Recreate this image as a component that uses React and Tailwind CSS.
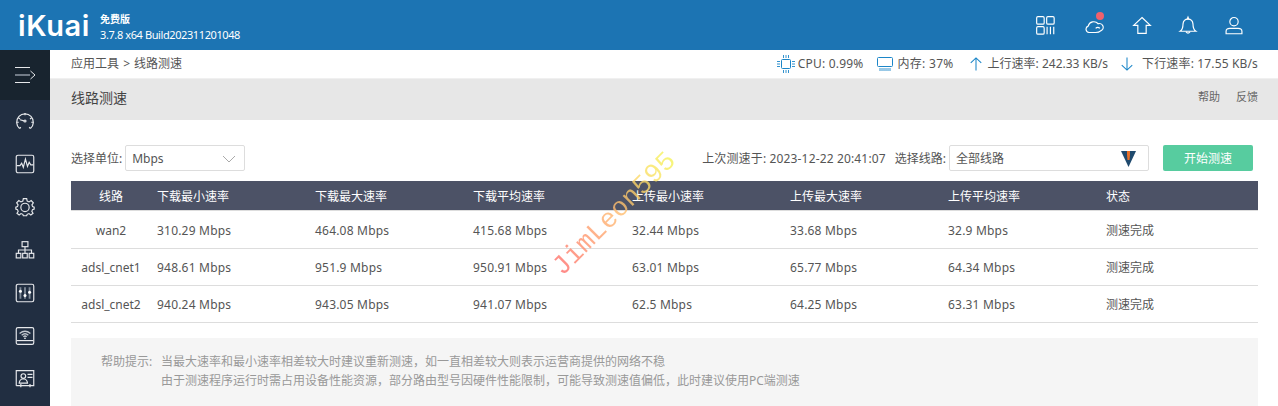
import React from 'react';

const rows = [
  ['wan2', '310.29 Mbps', '464.08 Mbps', '415.68 Mbps', '32.44 Mbps', '33.68 Mbps', '32.9 Mbps', 'h-[38px] pt-[2px]'],
  ['adsl_cnet1', '948.61 Mbps', '951.9 Mbps', '950.91 Mbps', '63.01 Mbps', '65.77 Mbps', '64.34 Mbps', 'h-[37px] pt-[2px]'],
  ['adsl_cnet2', '940.24 Mbps', '943.05 Mbps', '941.07 Mbps', '62.5 Mbps', '64.25 Mbps', '63.31 Mbps', 'h-[37px] pt-[1px]'],
];

const heads = ['下载最小速率', '下载最大速率', '下载平均速率', '上传最小速率', '上传最大速率', '上传平均速率', '状态'];

const Ico = ({ children, className = '', w = 20, h = 20, sw = 1.4 }) => (
  <svg width={w} height={h} viewBox="0 0 24 24" fill="none" stroke="currentColor" strokeWidth={sw} className={className}>
    {children}
  </svg>
);

const sideIcons = [
  <Ico key="gauge">
    <path d="M5.5 21 A10 10 0 1 1 18.5 21" />
    <path d="M5.5 21 L7 19.5 M18.5 21 L17 19.5 M12 2.5 V5 M4 8 L6 9.5 M20 8 L18 9.5 M2 13.5 H4.5 M22 13.5 H19.5" />
    <circle cx="12" cy="12" r="1.2" />
    <path d="M10.8 11.8 L6 10.5" />
  </Ico>,
  <Ico key="pulse">
    <rect x="1.5" y="1.5" width="21" height="21" rx="2" />
    <path d="M2 14 H6 L8 11 L10 16 L12.5 6 L15 15 L17 10 L19 13 H22" />
  </Ico>,
  <Ico key="gear">
    <path d="M10 2.5 H14 L14.6 5.4 L16.9 6.4 L19.4 4.8 L22 7.6 L20.3 10 L21.1 12 L23 12.6 V15 L21 15.7 L20.2 17.8 L21.6 20 L19 22 L16.8 20.4 L14.6 21.3 L14 23 H10 L9.4 21.3 L7.2 20.4 L5 22 L2.4 20 L3.8 17.8 L3 15.7 L1 15 V12.6 L3 12 L3.7 10 L2 7.6 L4.6 4.8 L7.1 6.4 L9.4 5.4 Z" transform="translate(0 -0.5)" />
    <circle cx="12" cy="12.5" r="5" />
  </Ico>,
  <Ico key="tree">
    <rect x="8.5" y="2" width="7" height="6" />
    <rect x="1.5" y="16" width="5.5" height="5.5" />
    <rect x="9.2" y="16" width="5.5" height="5.5" />
    <rect x="17" y="16" width="5.5" height="5.5" />
    <path d="M12 8 V16 M4.2 16 V12 H19.8 V16" />
  </Ico>,
  <Ico key="sliders">
    <rect x="1.5" y="1.5" width="21" height="21" rx="2" />
    <path d="M6.5 5 V19 M12 5 V19 M17.5 5 V19" strokeWidth="2.2" stroke="#7f8a97" />
    <circle cx="6.5" cy="10" r="1.8" fill="#fff" stroke="none" />
    <circle cx="12" cy="15" r="1.8" fill="#fff" stroke="none" />
    <circle cx="17.5" cy="11" r="1.8" fill="#fff" stroke="none" />
  </Ico>,
  <Ico key="wifi">
    <rect x="1.5" y="2" width="21" height="20" rx="2" />
    <path d="M2 17.5 H22" />
    <path d="M5.5 9 Q12 3.5 18.5 9 M8 11 Q12 7.5 16 11 M10 13 Q12 11 14 13" strokeWidth="1.6" stroke="#c3c8cf" />
    <circle cx="12" cy="14.8" r="1" fill="#fff" stroke="none" />
  </Ico>,
  <Ico key="card">
    <path d="M1.5 20 V2 H22.5 V20 H1.5 M7 18 V22 M18 18 V22" />
    <circle cx="10" cy="8.5" r="2.8" />
    <path d="M5 17 Q5.5 12.5 9 12 H11 Q14.5 12.5 15 17 Z" />
    <path d="M15 6.5 H21 M15 10 H21" />
  </Ico>,
];

const App = () => {
  return (
    <div className="relative w-[1278px] h-[406px] overflow-hidden bg-white text-[12px] text-[#555] font-['Noto_Sans','Noto_Sans_CJK_SC',sans-serif]">
      {/* top bar */}
      <div className="flex items-center h-[50px] bg-[#1c74b3] text-white">
        <div className="w-[100px] pl-[18px] pt-[1px] text-[29px] leading-none font-semibold font-['Inter',sans-serif] tracking-[0.6px]">iKuai</div>
        <div className="text-[11px] leading-[15px] pt-[4px] tracking-[-0.4px]">
          <div className="font-bold text-[10px] tracking-normal">免费版</div>
          <div>3.7.8 x64 Build202311201048</div>
        </div>
        <div className="ml-auto flex items-center pr-[34px]">
          <Ico>
            <rect x="2" y="2" width="9" height="9" rx="1.5" />
            <rect x="14" y="2" width="9" height="9" rx="1.5" />
            <rect x="2" y="14" width="9" height="9" rx="1.5" />
            <path d="M14.5 14 V23 M18.5 14 V23 M22.5 14 V23" />
          </Ico>
          <div className="relative ml-[29px]">
            <Ico>
              <path d="M6 21 A4 4 0 0 1 5 13.3 A7 7 0 0 1 17 10.5 A4.5 4.5 0 0 1 20 19 Q18 21 14 21 Z" />
              <path d="M14 16 A3.5 3.5 0 0 1 19 16" />
            </Ico>
            <div className="absolute right-[0px] top-[-3px] w-[8px] h-[8px] rounded-full bg-[#f0616d]" />
          </div>
          <Ico className="ml-[28px]">
            <path d="M12 3 L22 12.5 H17 V22 H7 V12.5 H2 Z" />
          </Ico>
          <Ico className="ml-[26px]">
            <path d="M2.5 19.5 Q6 17 6 11 Q6.5 5 12 5 Q17.5 5 18 11 Q18 17 21.5 19.5 Z" />
            <path d="M11 5 L12 2.5 L13 5 M9.5 20 Q12 23.5 14.5 20" />
          </Ico>
          <Ico className="ml-[26px]">
            <circle cx="12" cy="8" r="5" />
            <path d="M2.5 22.5 V19.5 Q2.5 16 7 16 H17 Q21.5 16 21.5 19.5 V22.5 Z" />
          </Ico>
        </div>
      </div>

      <div className="flex h-[356px]">
        {/* side nav */}
        <div className="w-[50px] shrink-0 overflow-hidden bg-[#212e41] text-[#e6e8eb]">
          <div className="flex items-center justify-center h-[50px] bg-[#18242f]">
            <svg width="21" height="18" viewBox="0 0 21 18" fill="none" stroke="currentColor">
              <path d="M0 1.5 H15 M0 16.5 H15" />
              <path d="M0 9 H15" stroke="#8f99a5" strokeWidth="1.5" />
              <path d="M15.5 5 L20 9 L15.5 13" />
            </svg>
          </div>
          <div className="-mt-[1px]">
            {sideIcons.map((icon, i) => (
              <div key={i} className="flex items-center justify-center h-[43px]">{icon}</div>
            ))}
          </div>
        </div>

        <div className="flex-1 min-w-0">
          {/* status line */}
          <div className="flex items-center justify-between h-[29px] pl-[21px] pr-[20px] border-b border-[#f0f0f0]">
            <div className="text-[#555]">应用工具 <span className="mx-[1px]">&gt;</span> 线路测速</div>
            <div className="flex items-center">
              <svg width="18" height="18" viewBox="0 0 18 18" fill="none" stroke="currentColor" className="text-[#1c86c8] mr-[3px]">
                <rect x="4.5" y="4.5" width="9" height="9" rx="1" />
                <path d="M6.5 0 V3 M9 0 V3 M11.5 0 V3 M6.5 15 V18 M9 15 V18 M11.5 15 V18 M0 6.5 H3 M0 9 H3 M0 11.5 H3 M15 6.5 H18 M15 9 H18 M15 11.5 H18" strokeWidth="0.9" />
              </svg>
              <span className="tracking-[0.2px]">CPU: 0.99%</span>
              <svg width="16" height="15" viewBox="0 0 16 15" fill="none" stroke="currentColor" className="text-[#1c86c8] ml-[14px] mr-[4px]">
                <rect x="0.5" y="0.5" width="15" height="9" rx="1" />
                <path d="M3 11 V14 M5 11 V14 M7 11 V14 M9 11 V14 M11 11 V14 M13 11 V14" strokeWidth="0.9" />
              </svg>
              <span className="tracking-[0.3px]">内存: 37%</span>
              <Ico w={14} h={16} className="text-[#1c86c8] ml-[15px] mr-[5px]" sw={1.8}>
                <path d="M12 1.5 V23 M3 10 L12 1.5 L21 10" />
              </Ico>
              <span>上行速率: 242.33 KB/s</span>
              <Ico w={14} h={16} className="text-[#1c86c8] ml-[12px] mr-[8px]" sw={1.8}>
                <path d="M12 1 V22.5 M3 14 L12 22.5 L21 14" />
              </Ico>
              <span className="tracking-[0.15px]">下行速率: 17.55 KB/s</span>
            </div>
          </div>

          {/* title line */}
          <div className="flex items-center justify-between h-[41px] pb-[4px] pl-[21px] pr-[20px] bg-[#e7e7e7]">
            <div className="text-[14px] text-[#444]">线路测速</div>
            <div className="flex gap-[16px] text-[11px] text-[#666]">
              <span>帮助</span>
              <span>反馈</span>
            </div>
          </div>

          <div className="pl-[21px] pr-[20px]">
            {/* toolbar */}
            <div className="flex items-center justify-between h-[26px] mt-[25px]">
              <div className="flex items-center">
                <span className="mr-[3px] pt-[1px]">选择单位:</span>
                <div className="flex items-center justify-between w-[120px] h-[26px] pl-[6px] pr-[8px] pt-[1px] border border-[#ddd] rounded-[2px]">
                  <span>Mbps</span>
                  <svg width="14" height="8" viewBox="0 0 14 8" fill="none" stroke="#aaa"><path d="M1 1 L7 7 L13 1" /></svg>
                </div>
              </div>
              <div className="flex items-center pr-[5px]">
                <span className="tracking-[0.15px] pt-[1px]">上次测速于: 2023-12-22 20:41:07</span>
                <span className="ml-[9px] mr-[3px] pt-[1px]">选择线路:</span>
                <div className="flex items-center justify-between w-[200px] h-[26px] pl-[6px] pr-[12px] pt-[1px] border border-[#ddd] rounded-[2px]">
                  <span>全部线路</span>
                  <svg width="15" height="18" viewBox="0 0 15 18">
                    <path d="M0 1 H15 L7.5 17 Z" fill="#1f4a6e" />
                    <path d="M6 1 H9 V5 L8.5 10 H6.5 L6 5 Z" fill="#e8702a" />
                  </svg>
                </div>
                <button className="ml-[14px] w-[90px] h-[26px] pt-[1px] rounded-[2px] bg-[#57cc9f] text-white">开始测速</button>
              </div>
            </div>

            {/* table */}
            <div className="mt-[10px]">
              <div className="grid grid-cols-[86px_158px_158px_159px_158px_158px_158px_152px] items-center h-[30px] pt-[2px] bg-[#4c5266] text-white border-b border-[#ddd]">
                <div className="pr-[6px] text-center">线路</div>
                {heads.map((h) => (
                  <div key={h}>{h}</div>
                ))}
              </div>
              {rows.map((r) => (
                <div key={r[0]} className={`grid grid-cols-[86px_158px_158px_159px_158px_158px_158px_152px] items-center border-b border-[#ddd] ${r[7]}`}>
                  <div className="pr-[6px] text-center">{r[0]}</div>
                  {r.slice(1, 7).map((c, i) => (
                    <div key={i} className="tracking-[0.2px]">{c}</div>
                  ))}
                  <div>测速完成</div>
                </div>
              ))}
            </div>

            {/* help box */}
            <div className="flex mt-[15px] h-[68px] pt-[14px] pl-[30px] bg-[#f5f5f5] text-[#999] leading-[19px]">
              <span className="w-[60px] shrink-0">帮助提示:</span>
              <div>
                <div>当最大速率和最小速率相差较大时建议重新测速，如一直相差较大则表示运营商提供的网络不稳</div>
                <div>由于测速程序运行时需占用设备性能资源，部分路由型号因硬件性能限制，可能导致测速值偏低，此时建议使用PC端测速</div>
              </div>
            </div>
          </div>
        </div>
      </div>

      {/* watermark */}
      <div className="absolute left-[534px] top-[201px] -rotate-45 text-[27px] leading-none font-['Liberation_Mono',monospace] opacity-80 bg-gradient-to-r from-[#ff6b6b] via-[#ffb870] to-[#f5f55a] bg-clip-text text-transparent">
        JimLeon595
      </div>
    </div>
  );
};

export default App;
